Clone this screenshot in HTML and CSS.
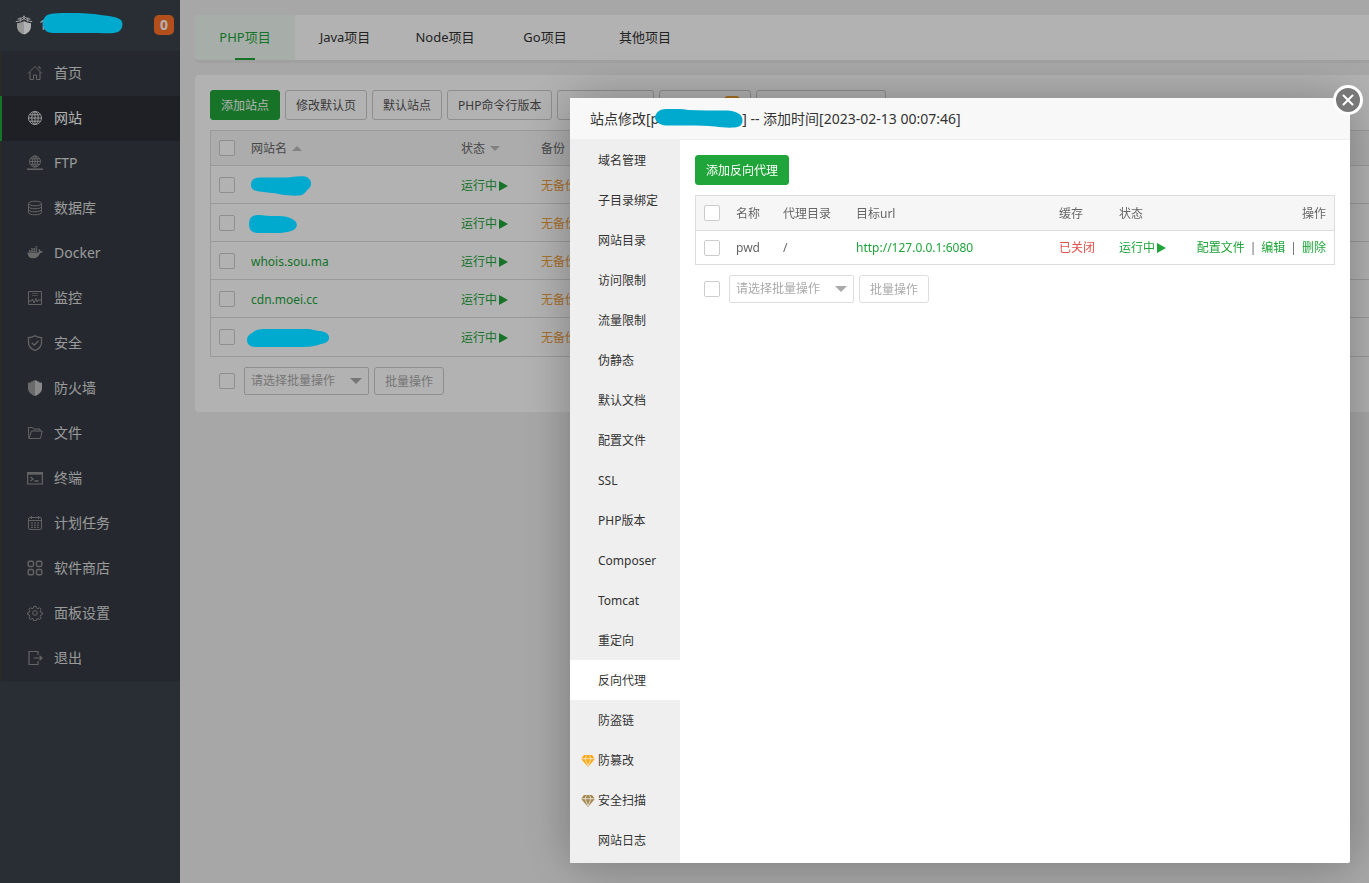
FILE: index.html
```html
<!DOCTYPE html>
<html lang="zh-CN">
<head>
<meta charset="utf-8">
<meta name="viewport" content="width=device-width, initial-scale=1">
<title>网站</title>
<link rel="stylesheet" href="styles.css">
</head>
<body>
<div class="app">
  <aside class="sidebar">
    <div class="brand">
      <svg class="brand-logo" viewBox="0 0 18 20" aria-hidden="true"><path d="M2 8.200c2.200 0 4.600-.8 7-2.200V19.500C4.500 18 2 15.500 2 11z" fill="#d8d8d8"/><path d="M9 6c2.400 1.400 4.800 2.200 7 2.200V11c0 4.500-2.500 7-7 8.500z" fill="#fff"/><path d="M.8 6.600C4 6.400 6.500 5.300 9 3.600c2.500 1.700 5 2.800 8.200 3M2.500 4.200C5 3.900 7 3 9 1.600c2 1.400 4 2.300 6.500 2.600M9 .5v4M5 2.500l.6 4M13 2.500l-.6 4" fill="none" stroke="#eee"/></svg>
      <span class="brand-name">1<svg class="blob blob-brand" viewBox="0 0 80 21" aria-hidden="true"><path d="M0 10C0 4 4 1 11 .6 25-.3 45 0 58 2c9 1 16 2 20 5 3 4 1 10-3 12-5 2-12 1-23 1H10C3 20 0 16 0 10z"/></svg></span>
      <span class="msg-count">0</span>
    </div>
    <nav class="menu">
      <a href="#"><svg viewBox="0 0 16 16"><path d="M1 8.500 8 1.500l7 7M3 7v7.500h3.500V10h3v4.500H13V7M11 2h2v2.500"/></svg>首页</a>
      <a href="#" class="active"><svg viewBox="0 0 16 16"><circle cx="8" cy="8" r="6.500"/><ellipse cx="8" cy="8" rx="3.200" ry="6.500"/><path d="M8 1.500v13M1.500 8h13M2.600 4.800h10.800M2.600 11.200h10.800"/></svg>网站</a>
      <a href="#"><svg viewBox="0 0 16 16"><circle cx="8" cy="6.500" r="5.500"/><ellipse cx="8" cy="6.500" rx="2.600" ry="5.500"/><path d="M8 1v11M2.500 6.500h11M3.500 3.800h9M3.500 9.200h9"/><path d="M0 14.200h16M6 14.200h4" stroke-width="1.600"/></svg>FTP</a>
      <a href="#"><svg viewBox="0 0 16 16"><ellipse cx="8" cy="3.500" rx="6.500" ry="2.300"/><path d="M1.500 3.500v9c0 3 13 3 13 0v-9M1.500 6.500c0 3 13 3 13 0M1.500 9.500c0 3 13 3 13 0"/></svg>数据库</a>
      <a href="#"><svg viewBox="0 0 16 16"><path class="solid" d="M.7 7.500h10.800c.6-.8.500-2 0-2.800l.8-.7c.8.6 1.200 1.300 1.200 2.200.8-.1 1.600 0 2.200.5-.4 1-1.400 1.400-2.700 1.400C12 11.500 9.500 13.300 6 13.300c-3.700 0-5.500-2.200-5.300-5.800zM2 5.300h1.600v1.600H2zM4.200 5.300h1.600v1.600H4.200zM6.400 5.300H8v1.600H6.400zM8.600 5.300h1.600v1.600H8.600zM6.400 3.200H8v1.500H6.400zM4.200 3.200h1.600v1.500H4.200zM8.600 3.200h1.600v1.500H8.600zM8.600 1.200h1.600v1.400H8.600z"/></svg>Docker</a>
      <a href="#"><svg viewBox="0 0 16 16"><path d="M1.500 1.500h13v13h-13zM2 11h2.500l1-2 1.500 4L9 8.500l1.300 3.500 1-2H14"/><path d="M5 3.500h6M5 5.500h6" opacity=".55"/></svg>监控</a>
      <a href="#"><svg viewBox="0 0 16 16"><path d="M8 .7c2 1.300 4 1.900 6.500 2v5c0 3.500-2.300 6-6.500 7.800C3.800 13.700 1.500 11.200 1.500 7.700v-5C4 2.600 6 2 8 .7zM4.800 7.800l2.400 2.400 4.300-4.400" stroke-width="1.300"/></svg>安全</a>
      <a href="#"><svg viewBox="0 0 16 16"><path class="solid" d="M8 0v16c-4-1.500-7-4-7-8V2.500l1.500.8V2l1.800.7V1l1.700.6V.3l1 .5z"/><path class="solid bright" d="M8 0v16c4-1.500 7-4 7-8V2.500l-1.500.8V2l-1.800.7V1l-1.700.6V.3l-1 .5z"/></svg>防火墙</a>
      <a href="#"><svg viewBox="0 0 16 16"><path d="M2 13.500 1.300 3V2.500H5.500l1 1.500H13v2M2 13.500h11.500L15.200 6H4.500z"/></svg>文件</a>
      <a href="#"><svg viewBox="0 0 16 16"><path d="M.6 2.500h14.800v11.500H.6z" stroke-width="1.200"/><path d="M1 3.700h14" stroke-width="2"/><path d="M3.500 7l2.500 2-2.500 2M7.500 11h4" stroke-width="1.300"/></svg>终端</a>
      <a href="#"><svg viewBox="0 0 16 16"><rect x="1.500" y="2.500" width="13" height="12" rx="1.500"/><path d="M1.500 5.500h13M4.500 1v3M11.500 1v3"/><path d="M4 8h8M4 10.200h8M4 12.400h8" stroke-dasharray="2 1"/></svg>计划任务</a>
      <a href="#"><svg viewBox="0 0 16 16"><g stroke-width="1.400"><rect x="1.200" y="1.200" width="5.300" height="5.300" rx="1.400"/><rect x="9.500" y="1.200" width="5.300" height="5.300" rx="1.400"/><rect x="1.200" y="9.500" width="5.300" height="5.300" rx="1.400"/><rect x="9.500" y="9.500" width="5.300" height="5.300" rx="1.400"/></g></svg>软件商店</a>
      <a href="#"><svg viewBox="0 0 16 16"><circle cx="8" cy="8" r="2.300"/><path d="M6.800 1.300h2.400l.4 1.800 1.400.6 1.600-1 1.500 1.600-1 1.600.6 1.300 1.600.4v2l-1.600.4-.6 1.400 1 1.600-1.500 1.500-1.600-1-1.400.6-.4 1.600H6.800l-.4-1.600-1.400-.6-1.600 1-1.500-1.500 1-1.600-.6-1.400-1.600-.4v-2l1.600-.4.6-1.300-1-1.600 1.500-1.600 1.600 1 1.400-.6z"/></svg>面板设置</a>
      <a href="#"><svg viewBox="0 0 16 16"><path d="M11 5V1.500H2v13h9V11M6.500 8H15M12.500 5.700 15 8l-2.500 2.300" stroke-width="1.200"/></svg>退出</a>
    </nav>
  </aside>

  <main class="main">
    <nav class="tabs">
      <a href="#" class="active">PHP项目</a>
      <a href="#">Java项目</a>
      <a href="#">Node项目</a>
      <a href="#">Go项目</a>
      <a href="#">其他项目</a>
    </nav>
    <section class="panel">
      <div class="toolbar">
        <button type="button" class="btn primary">添加站点</button>
        <button type="button" class="btn">修改默认页</button>
        <button type="button" class="btn">默认站点</button>
        <button type="button" class="btn">PHP命令行版本</button>
        <button type="button" class="btn medium"></button>
        <button type="button" class="btn flagged"><span class="flag"></span></button>
        <button type="button" class="btn wide"></button>
      </div>
      <table class="grid sites">
        <colgroup><col class="c-check"><col class="c-site"><col class="c-state"><col></colgroup>
        <thead><tr><th><input type="checkbox" aria-label="全选"></th><th>网站名<i class="sort up"></i></th><th>状态<i class="sort down"></i></th><th>备份</th></tr></thead>
        <tbody>
          <tr><td><input type="checkbox" aria-label="选择"></td><td><svg class="blob blob-1" viewBox="0 0 60 20" aria-hidden="true"><path d="M0 9C0 4 3 2 8 1.500h28C42 1 48-.5 54 .5c6 1 8 8 4 12-2 1-3 4-6 6-5 2-14 1-22 0-8-2-16-2-22-3-6-1-8-3-8-6.500z"/></svg></td><td><a href="#" class="run">运行中<svg viewBox="0 0 9 10"><path d="M0 0l9 5-9 5z"/></svg></a></td><td><a href="#" class="none">无备份</a></td></tr>
          <tr><td><input type="checkbox" aria-label="选择"></td><td><svg class="blob blob-2" viewBox="0 0 48 18" aria-hidden="true"><path d="M0 9C0 3 3 0 9 0c5 0 8 1 14 1 8 0 13 0 18 2 9 3 9 11 1 13-8 3-20 2-33 2C3 18 0 15 0 9z"/></svg></td><td><a href="#" class="run">运行中<svg viewBox="0 0 9 10"><path d="M0 0l9 5-9 5z"/></svg></a></td><td><a href="#" class="none">无备份</a></td></tr>
          <tr><td><input type="checkbox" aria-label="选择"></td><td><a href="#" class="site">whois.sou.ma</a></td><td><a href="#" class="run">运行中<svg viewBox="0 0 9 10"><path d="M0 0l9 5-9 5z"/></svg></a></td><td><a href="#" class="none">无备份</a></td></tr>
          <tr><td><input type="checkbox" aria-label="选择"></td><td><a href="#" class="site">cdn.moei.cc</a></td><td><a href="#" class="run">运行中<svg viewBox="0 0 9 10"><path d="M0 0l9 5-9 5z"/></svg></a></td><td><a href="#" class="none">无备份</a></td></tr>
          <tr><td><input type="checkbox" aria-label="选择"></td><td><svg class="blob blob-3" viewBox="0 0 82 18" aria-hidden="true"><path d="M0 11C0 7 3 5 5 4 9 0 14 0 21 0h38c7 0 10 2 14 2 12 1 12 12 1 13-8 3-15 3-24 3H8C3 18 0 15 0 11z"/></svg></td><td><a href="#" class="run">运行中<svg viewBox="0 0 9 10"><path d="M0 0l9 5-9 5z"/></svg></a></td><td><a href="#" class="none">无备份</a></td></tr>
        </tbody>
      </table>
      <div class="batch">
        <input type="checkbox" aria-label="全选">
        <span class="select"><select aria-label="批量操作"><option>请选择批量操作</option></select></span>
        <button type="button" class="btn small">批量操作</button>
      </div>
    </section>
  </main>
</div>

<div class="mask"></div>

<div class="dialog" role="dialog" aria-labelledby="dialog-title">
  <button type="button" class="close" aria-label="关闭"><svg viewBox="0 0 12 12"><path d="M1.500 1.500l9 9M10.500 1.500l-9 9"/></svg></button>
  <header class="dialog-head" id="dialog-title"><span>站点修改[p</span><svg class="blob blob-title" viewBox="0 0 88 19" aria-hidden="true"><path d="M0 8C1 3 5 0 11 0c8 0 15-.5 22 1 12 .7 25 .3 37 .6 6-.3 11 1 15 4 4 4 3 10-1 12-6 2-16 1-24 0-9-1-16-1-25-1H11C4 16 0 12 0 8z"/></svg><span>] -- 添加时间[2023-02-13 00:07:46]</span></header>
  <div class="dialog-body">
    <nav class="side-tabs">
      <a href="#">域名管理</a>
      <a href="#">子目录绑定</a>
      <a href="#">网站目录</a>
      <a href="#">访问限制</a>
      <a href="#">流量限制</a>
      <a href="#">伪静态</a>
      <a href="#">默认文档</a>
      <a href="#">配置文件</a>
      <a href="#">SSL</a>
      <a href="#">PHP版本</a>
      <a href="#">Composer</a>
      <a href="#">Tomcat</a>
      <a href="#">重定向</a>
      <a href="#" class="active">反向代理</a>
      <a href="#">防盗链</a>
      <a href="#" class="with-gem"><svg class="gem gold" viewBox="0 0 14 12"><path class="face" d="M3 0h8l3 3.800L7 12 0 3.800z"/><path class="cut" d="M0 3.700h14M4 3.700 7 11l3-7.300M4 3.700 5.500.5M10 3.700 8.500.5"/></svg>防篡改</a>
      <a href="#" class="with-gem"><svg class="gem bronze" viewBox="0 0 14 12"><path class="face" d="M3 0h8l3 3.800L7 12 0 3.800z"/><path class="cut" d="M0 3.700h14M4 3.700 7 11l3-7.300M4 3.700 5.500.5M10 3.700 8.500.5"/></svg>安全扫描</a>
      <a href="#">网站日志</a>
    </nav>
    <section class="content">
      <button type="button" class="btn primary">添加反向代理</button>
      <table class="grid proxies">
        <colgroup><col class="c-check"><col class="c-name"><col class="c-dir"><col class="c-url"><col class="c-cache"><col class="c-run"><col></colgroup>
        <thead><tr><th><input type="checkbox" aria-label="全选"></th><th>名称</th><th>代理目录</th><th>目标url</th><th>缓存</th><th>状态</th><th class="right">操作</th></tr></thead>
        <tbody><tr><td><input type="checkbox" aria-label="选择"></td><td>pwd</td><td>/</td><td><a href="#">http://127.0.0.1:6080</a></td><td><a href="#" class="off">已关闭</a></td><td><a href="#" class="run">运行中<svg viewBox="0 0 9 10"><path d="M0 0l9 5-9 5z"/></svg></a></td><td><div class="ops"><a href="#">配置文件</a><span>|</span><a href="#">编辑</a><span>|</span><a href="#">删除</a></div></td></tr></tbody>
      </table>
      <div class="batch">
        <input type="checkbox" aria-label="全选">
        <span class="select"><select aria-label="批量操作"><option>请选择批量操作</option></select></span>
        <button type="button" class="btn small">批量操作</button>
      </div>
    </section>
  </div>
</div>
</body>
</html>
```

FILE: styles.css
```css
* { box-sizing: border-box; }

body {
  margin: 0;
  background: #f0f0f0;
  color: #666;
  font: 12px/18px "Noto Sans", "Noto Sans CJK SC", sans-serif;
  overflow: hidden;
}

a { color: #20a53a; text-decoration: none; }
button, select { font: inherit; }
svg { flex: none; }

.app { display: flex; min-height: 100vh; }

/* sidebar */
.sidebar { width: 180px; flex: none; background: #3c434d; }
.brand { display: flex; align-items: center; height: 51px; padding: 0 6px 2px 15px; }
.brand-logo { width: 18px; height: 20px; }
.brand-name {
  display: flex;
  align-items: center;
  flex: 1;
  margin-left: 6px;
  color: #eee;
  font-size: 14px;
}
.msg-count {
  width: 20px;
  border-radius: 5px;
  background: #ff7228;
  color: #fff;
  font-size: 14px;
  font-weight: bold;
  line-height: 20px;
  text-align: center;
}
.menu a {
  display: flex;
  align-items: center;
  gap: 11px;
  height: 45px;
  padding: 0 0 2px 25px;
  border-left: 2px solid #3b3d3c;
  background: #363c44;
  color: #ddd;
  font-size: 14px;
}
.menu svg { width: 16px; height: 16px; fill: none; stroke: #8f8f8f; }
.menu .solid { fill: #999; stroke: none; }
.menu .bright { fill: #c4c4c4; }
.menu .active { border-color: #20a53a; background: #2c2f35; color: #fff; }
.menu .active svg { stroke: #ddd; }

/* page */
.main { flex: 1; min-width: 0; padding: 15px 0 0 15px; }
.tabs {
  display: flex;
  margin-bottom: 15px;
  border-radius: 4px 0 0 4px;
  background: #fff;
  box-shadow: 0 3px 0 #e6e6e6;
}
.tabs a {
  display: flex;
  flex-direction: column;
  align-items: center;
  width: 100px;
  height: 45px;
  color: #333;
  font-size: 13px;
  line-height: 45px;
}
.tabs .active { background: #f0f9f2; color: #20a53a; border-radius: 4px 0 0 4px; }
.tabs .active::after { content: ""; width: 20px; height: 2px; margin-top: -2px; background: #20a53a; }
.panel { padding: 15px 0 17px 15px; border-radius: 4px 0 0 4px; background: #fff; }
.toolbar { display: flex; gap: 5px; }

.btn {
  height: 30px;
  padding: 2px 10px 0;
  border: 1px solid #ccc;
  border-radius: 3px;
  background: #fff;
  color: #555;
  white-space: nowrap;
}
.btn.primary { border-color: #20a53a; background: #20a53a; color: #fff; }
.btn.small { height: 28px; color: #aaa; }
.btn.medium { width: 97px; }
.btn.flagged { display: flex; justify-content: flex-end; width: 92px; }
.btn.wide { width: 130px; }
.flag { width: 16px; height: 8px; margin-top: 3px; border-radius: 4px; background: #f0a030; }

input[type="checkbox"] {
  display: block;
  appearance: none;
  width: 16px;
  height: 16px;
  margin: 0;
  border: 1px solid #ccc;
  border-radius: 2px;
  background: #fff;
}

/* tables */
.grid {
  width: 100%;
  margin-top: 10px;
  border: 1px solid #ddd;
  border-collapse: separate;
  border-spacing: 0;
  table-layout: fixed;
}
.grid th, .grid td { padding: 2px 8px 0; text-align: left; white-space: nowrap; }
.grid th { height: 35px; border-bottom: 1px solid #ddd; background: #f6f6f6; font-weight: normal; }
.grid .right { text-align: right; }
.grid th:first-child, .grid td:first-child, .proxies td { padding-top: 0; }
.grid td { height: 33px; }
.sites { border-right: 0; }
.sites td { height: 38px; border-bottom: 1px solid #ddd; }
.sites tr:last-child td { border-bottom: 0; }
.c-check { width: 32px; }
.c-site { width: 210px; }
.c-state { width: 80px; }
.c-name { width: 47px; }
.c-dir { width: 73px; }
.c-url { width: 203px; }
.c-cache { width: 60px; }
.c-run { width: 68px; }
.sort { display: inline-block; margin-left: 5px; border: 5px solid transparent; vertical-align: 2px; }
.sort.up { border-top: 0; border-bottom-color: #bbb; }
.sort.down { border-bottom: 0; border-top-color: #bbb; }
.run { display: flex; align-items: center; gap: 2px; }
.run svg { width: 9px; height: 10px; fill: #20a53a; }
.none { color: #f0a040; }
.off { color: #e0504a; }
.ops { display: flex; justify-content: flex-end; gap: 5px; }

.batch { display: flex; align-items: center; margin-top: 10px; padding-left: 9px; }
.select { position: relative; width: 125px; margin: 0 5px 0 9px; }
.select select {
  display: block;
  appearance: none;
  width: 100%;
  height: 28px;
  padding: 0 6px;
  border: 1px solid #ccc;
  border-radius: 2px;
  background: #fff;
  color: #aaa;
}
.select::after {
  content: "";
  position: absolute;
  top: 11px;
  right: 7px;
  border: 6px solid transparent;
  border-top-color: #aaa;
  border-bottom: 0;
  pointer-events: none;
}

/* painted-over names stay above the mask */
.blob { position: relative; z-index: 20; display: block; fill: #00a9ce; }
.blob-brand { width: 80px; height: 21px; margin: -2px 0 0 -4px; }
.blob-1 { width: 60px; height: 20px; }
.blob-2 { width: 48px; height: 18px; margin-left: -2px; }
.blob-3 { width: 82px; height: 18px; margin-left: -4px; }
.blob-title { width: 88px; height: 19px; margin: 0 -1px 0 -4px; }

.mask { position: fixed; inset: 0; z-index: 10; background: rgba(0, 0, 0, .3); }

/* dialog */
.dialog {
  position: fixed;
  top: 98px;
  right: 19px;
  bottom: 20px;
  z-index: 15;
  display: flex;
  flex-direction: column;
  width: 780px;
  border-radius: 2px;
  background: #fff;
  box-shadow: 1px 1px 50px rgba(0, 0, 0, .3);
}
.close {
  position: absolute;
  top: -13px;
  right: -13px;
  display: flex;
  align-items: center;
  justify-content: center;
  width: 30px;
  height: 30px;
  padding: 0;
  border: 3px solid #fff;
  border-radius: 50%;
  background: #787878;
}
.close svg { width: 12px; height: 12px; stroke: #fff; stroke-width: 2; stroke-linecap: round; }
.dialog-head {
  display: flex;
  align-items: center;
  height: 42px;
  padding: 0 20px;
  border-bottom: 1px solid #eee;
  background: #f8f8f8;
  color: #333;
  font-size: 14px;
  white-space: pre;
}
.dialog-body { display: flex; flex: 1; min-height: 0; }
.side-tabs { width: 110px; flex: none; background: #efefef; overflow: hidden; }
.side-tabs a {
  display: flex;
  align-items: center;
  height: 40px;
  padding: 2px 0 0 28px;
  color: #333;
}
.side-tabs .active { background: #fff; }
.side-tabs .with-gem { gap: 3px; padding-left: 11px; }
.gem { width: 14px; height: 12px; }
.gold .face { fill: #ffa912; }
.bronze .face { fill: #a5884f; }
.cut { fill: none; stroke: #efefef; stroke-width: 0.8; }
.content { flex: 1; min-width: 0; padding: 15px; }
.content .btn.small, .content select { border-color: #ddd; }
```
